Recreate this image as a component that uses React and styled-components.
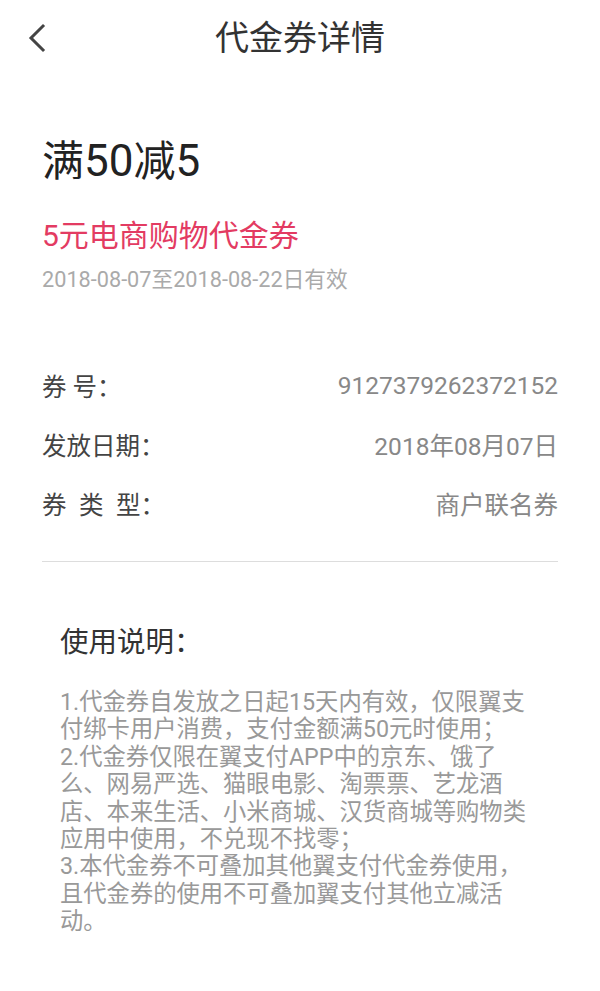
import React from "react";
import styled, { createGlobalStyle } from "styled-components";

const Global = createGlobalStyle`
  html, body { margin: 0; padding: 0; background: #fff; }
  body { font-family: Roboto, "Noto Sans CJK SC", sans-serif; }
`;

const Page = styled.div`
  width: 600px;
  min-height: 991px;
  background: #fff;
  display: flex;
  flex-direction: column;
`;

const Header = styled.header`
  height: 75px;
  display: grid;
  grid-template-columns: 80px 1fr 80px;
  align-items: center;
`;

const Back = styled.button`
  border: 0;
  background: none;
  padding: 0 0 0 26px;
  height: 75px;
  display: flex;
  align-items: center;
  cursor: pointer;
`;

const Title = styled.h1`
  margin: 0;
  text-align: center;
  font-weight: 400;
  font-size: 34px;
  color: #333;
  line-height: 40px;
`;

const Body = styled.main`
  padding: 0 42px;
  display: flex;
  flex-direction: column;
`;

const Amount = styled.div`
  margin-top: 62px;
  font-size: 42px;
  line-height: 49px;
  color: #222;
`;

const Digits = styled.span`
  font-size: 44px;
`;

const Name = styled.div`
  margin-top: 32px;
  font-size: 30px;
  line-height: 36px;
  color: #e33b62;
`;

const Valid = styled.div`
  margin-top: 12px;
  font-size: 21.7px;
  line-height: 28px;
  color: #aaa;
`;

const Rows = styled.div`
  margin-top: 62px;
  display: flex;
  flex-direction: column;
`;

const Row = styled.div`
  height: 59px;
  display: flex;
  align-items: center;
  justify-content: space-between;
  font-size: 24.5px;
`;

const Label = styled.span`
  color: #444;
  white-space: pre;
`;

const Value = styled.span`
  color: #888;
`;

const Divider = styled.hr`
  margin: 28px 0 0;
  border: 0;
  border-top: 1px solid #ddd;
`;

const Notes = styled.section`
  padding: 0 0 0 18px;
  margin-top: 64px;
`;

const NotesTitle = styled.h2`
  margin: 0;
  font-weight: 400;
  font-size: 28.5px;
  line-height: 34px;
  color: #333;
`;

const NotesText = styled.div`
  margin-top: 29px;
  width: 474px;
  font-size: 23.3px;
  line-height: 27.4px;
  color: #999;
`;

const Para = styled.p`
  margin: 0;
`;

const rows = [
  ["券 号：", "9127379262372152"],
  ["发放日期：", "2018年08月07日"],
  ["券\u2002类\u2002型：", "商户联名券"],
];

const notes = [
  "1.代金券自发放之日起15天内有效，仅限翼支付绑卡用户消费，支付金额满50元时使用；",
  "2.代金券仅限在翼支付APP中的京东、饿了么、网易严选、猫眼电影、淘票票、艺龙酒店、本来生活、小米商城、汉货商城等购物类应用中使用，不兑现不找零；",
  "3.本代金券不可叠加其他翼支付代金券使用，且代金券的使用不可叠加翼支付其他立减活动。",
];

export default function App() {
  return (
    <Page>
      <Global />
      <Header>
        <Back aria-label="返回">
          <svg width="22" height="30" viewBox="0 0 22 30">
            <path d="M17 3 L5 15 L17 27" fill="none" stroke="#444" strokeWidth="3" strokeLinecap="square" />
          </svg>
        </Back>
        <Title>代金券详情</Title>
        <div />
      </Header>
      <Body>
        <Amount>
          满<Digits>50</Digits>减<Digits>5</Digits>
        </Amount>
        <Name>5元电商购物代金券</Name>
        <Valid>2018-08-07至2018-08-22日有效</Valid>
        <Rows>
          {rows.map(([l, v]) => (
            <Row key={l}>
              <Label>{l}</Label>
              <Value>{v}</Value>
            </Row>
          ))}
        </Rows>
        <Divider />
        <Notes>
          <NotesTitle>使用说明：</NotesTitle>
          <NotesText>
            {notes.map((n) => (
              <Para key={n}>{n}</Para>
            ))}
          </NotesText>
        </Notes>
      </Body>
    </Page>
  );
}
